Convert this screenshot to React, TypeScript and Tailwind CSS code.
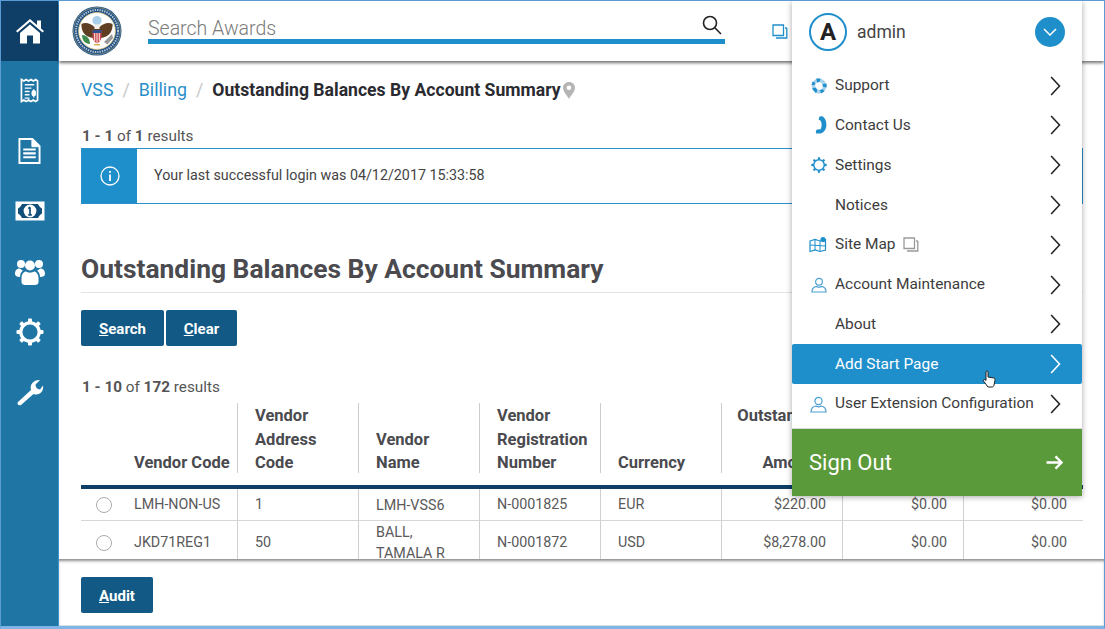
import type { ReactNode } from "react";

function Seal() {
  return (
    <svg viewBox="0 0 50 50" className="h-[50px] w-[50px]">
      <circle cx="25" cy="25" r="24.5" fill="#1d4f86" />
      <circle cx="25" cy="25" r="23.4" fill="none" stroke="#d9c77a" strokeWidth="0.5" />
      <circle cx="25" cy="25" r="21" fill="none" stroke="#b9c6cf" strokeWidth="2" strokeDasharray="1.4 1" />
      <circle cx="25" cy="25" r="18.4" fill="#ffffff" stroke="#d9c77a" strokeWidth="0.8" />
      <circle cx="25" cy="14.5" r="4.6" fill="#a9d0e8" />
      <path d="M23.5 22 C19 17 13 16 9.5 18 C9 24 12 31 21 32 L29 32 C38 31 41 24 40.5 18 C37 16 31 17 26.5 22 Z" fill="#5e3f24" />
      <path d="M22.5 18.5 H27.5 V23 H22.5 Z" fill="#f2efe6" />
      <path d="M20.5 24 H29.5 V31 C29.5 34 27.5 36 25 37.5 C22.5 36 20.5 34 20.5 31 Z" fill="#c8454a" />
      <path d="M20.5 24 H29.5 V27 H20.5 Z" fill="#2d4f8e" />
      <path d="M22.7 27 V35 M25 27 V37 M27.3 27 V35" stroke="#ffffff" strokeWidth="0.9" />
      <path d="M10 29 C14 29 18 32 18 38 C13 38 10 34 10 29 Z" fill="#3f8a4d" />
      <path d="M40 28 L32 36 L35.5 38.5 L41 32 Z" fill="#9a9a9a" />
      <path d="M22 38 H28 V39.5 H22 Z" fill="#d9b24a" />
    </svg>
  );
}

function HomeIcon() {
  return (
    <svg viewBox="0 0 28 26" className="h-[26px] w-[28px]" fill="#ffffff">
      <path d="M14 1 L21 7 V2.5 H25 V10.4 L28 13 L26.6 14.6 L14 3.8 L1.4 14.6 L0 13 Z" />
      <path d="M14 6.4 L24 15 V25.5 H17 V17.5 H11 V25.5 H4 V15 Z" />
    </svg>
  );
}

function ReceiptIcon() {
  return (
    <svg viewBox="0 0 20 26" className="h-[25px] w-[19px]" fill="none" stroke="#ffffff">
      <path d="M1.5 1.5 L4 3 L6.5 1.5 L9 3 L11.5 1.5 L14 3 L16.5 1.5 L18.5 3 V23 L16.5 24.5 L14 23 L11.5 24.5 L9 23 L6.5 24.5 L4 23 L1.5 24.5 Z" strokeWidth="1.8" />
      <path d="M5 7 H15 M5 10.5 H12 M5 14 H10 M5 17.5 H10 M5 21 H10" strokeWidth="1.5" />
      <path d="M14.5 11.5 V20.5" strokeWidth="1" />
      <ellipse cx="14.5" cy="16" rx="2.4" ry="3.4" fill="#ffffff" stroke="none" />
    </svg>
  );
}

function DocIcon() {
  return (
    <svg viewBox="0 0 24 28" className="h-[28px] w-[23px]" fill="none" stroke="#ffffff" strokeWidth="2">
      <path d="M1.5 1.5 H15 L22.5 9 V26.5 H1.5 Z" />
      <path d="M14.5 1.5 V9.5 H22.5" fill="#ffffff" strokeWidth="1" />
      <path d="M5.5 12.5 H18.5 M5.5 16.5 H18.5 M5.5 20.5 H18.5" strokeWidth="2.2" />
    </svg>
  );
}

function BillIcon() {
  return (
    <svg viewBox="0 0 30 20" className="h-[20px] w-[30px]">
      <rect x="0.5" y="0.5" width="29" height="19" fill="#ffffff" />
      <path d="M7 3 H23 C24 5 25.5 7 27 7.5 V12.5 C25.5 13 24 15 23 17 H7 C6 15 4.500 13 3 12.500 V7.500 C4.500 7 6 5 7 3 Z" fill="#0f4f7a" />
      <circle cx="15" cy="10" r="6.4" fill="#ffffff" />
      <path d="M15 6.200 V13.800 M13.300 7.600 L15 6.200 M13.200 13.800 H16.800" stroke="#0f4f7a" strokeWidth="1.700" fill="none" />
    </svg>
  );
}

function UsersIcon() {
  return (
    <svg viewBox="0 0 30 27" className="h-[27px] w-[30px]" fill="#ffffff">
      <circle cx="6" cy="6" r="4" />
      <circle cx="24" cy="6" r="4" />
      <circle cx="15" cy="7.5" r="5" />
      <path d="M0 16 C0 12 2 10.5 5 10.5 C6.5 12 7.5 12.5 8 12.5 C5.5 14.5 5 17 5 19 C2 19 0 18 0 16 Z" />
      <path d="M30 16 C30 12 28 10.5 25 10.5 C23.5 12 22.5 12.5 22 12.5 C24.5 14.5 25 17 25 19 C28 19 30 18 30 16 Z" />
      <path d="M6.5 20 C6.5 16 9 13.5 11 13.5 C13 15 17 15 19 13.5 C21 13.5 23.5 16 23.5 20 V24 C23.5 26 22 27 20 27 H10 C8 27 6.5 26 6.5 24 Z" />
    </svg>
  );
}

function GearIcon({ size = "h-[28px] w-[28px]", color = "#ffffff", width = 3.2 }: { size?: string; color?: string; width?: number }) {
  const teeth = [0, 45, 90, 135, 180, 225, 270, 315];
  return (
    <svg viewBox="0 0 28 28" className={size}>
      <circle cx="14" cy="14" r="9.2" fill="none" stroke={color} strokeWidth={width} />
      {teeth.map((a) => (
        <rect key={a} x="12" y="0.5" width="4" height="4" rx="1" fill={color} transform={`rotate(${a} 14 14)`} />
      ))}
    </svg>
  );
}

function WrenchIcon() {
  return (
    <svg viewBox="0 0 28 28" className="h-[28px] w-[28px]" fill="#ffffff">
      <path d="M2 24 L15 12 C13.5 6 18 1.5 24 2 L19.5 6.5 C19.5 9.5 21 11 24 11.5 L27 7.5 C28 14 23 18 17.5 16 L5 27 C3 28 0.5 26 2 24 Z" />
    </svg>
  );
}

function ScreensIcon({ color }: { color: string }) {
  return (
    <svg viewBox="0 0 16 15" className="h-[15px] w-[16px]" fill="none" stroke={color} strokeWidth="1.3">
      <path d="M1 1 H11.500 V11.500 H1 Z" />
      <path d="M4 14 H14.800 V4 M13 4 H14.800" />
    </svg>
  );
}

function SupportIcon() {
  return (
    <svg viewBox="0 0 16 16" className="h-[16px] w-[16px]" fill="#1f8fcb">
      <circle cx="8" cy="8" r="5.6" fill="none" stroke="#a6d1ea" strokeWidth="3.6" />
      <path d="M5.2 0.6 L9.4 0.4 L8.6 3.8 L6.2 4.6 Z M15.6 5.4 L15.6 9.6 L12 8.8 L11.4 6.2 Z M1 10.6 L4.8 9.6 L6.4 12 L5 15.2 Z M9 12.2 L11.4 11.2 L13.6 13.2 L10 15.6 Z M0.5 7 L1.6 3.4 L4 4.8 L3.6 7 Z" />
    </svg>
  );
}

function PhoneIcon() {
  return (
    <svg viewBox="0 0 12 18" className="h-[18px] w-[12px]" fill="#1f8fcb">
      <path d="M4.5 0.4 L7.5 0.2 C10.4 2.4 11.4 5.4 11.4 9 C11.4 13 9.4 16 5.8 17.6 L1.2 17.4 L0.8 15 L2 13.6 L5.6 13.2 C7 10.6 7 7.2 5.6 4.8 L3.6 3.6 Z" />
    </svg>
  );
}

function MapIcon() {
  return (
    <svg viewBox="0 0 18 17" className="h-[17px] w-[18px]" fill="none" stroke="#1f8fcb" strokeWidth="1.2">
      <path d="M1 5 L6 3.5 L11 5 L16.5 3.5 V14 L11 15.5 L6 14 L1 15.5 Z" />
      <path d="M6 3.5 V14 M11 5 V15.5 M1 9 L16 10" strokeWidth="1" />
      <circle cx="14" cy="3.5" r="2.6" fill="#1f8fcb" stroke="none" />
    </svg>
  );
}

function UserIcon({ size }: { size: string }) {
  return (
    <svg viewBox="0 0 17 17" className={size} fill="none" stroke="#4a9fd1" strokeWidth="1.2">
      <circle cx="8.5" cy="5" r="3.6" />
      <path d="M1 16 C1 12 3 10.5 6 10 C7.5 11 9.5 11 11 10 C14 10.5 16 12 16 16 Z" />
    </svg>
  );
}

function Chevron({ color = "#222222" }: { color?: string }) {
  return (
    <svg viewBox="0 0 12 22" className="h-[20px] w-[11px]" fill="none" stroke={color} strokeWidth="1.7">
      <path d="M1.2 1.2 L10.4 11 L1.2 20.8" />
    </svg>
  );
}

const menuItems: { label: string; icon?: ReactNode; extra?: ReactNode; active?: boolean }[] = [
  { label: "Support", icon: <SupportIcon /> },
  { label: "Contact Us", icon: <PhoneIcon /> },
  { label: "Settings", icon: <GearIcon size="h-[16px] w-[16px]" color="#1f8fcb" width={2.6} /> },
  { label: "Notices" },
  { label: "Site Map", icon: <MapIcon />, extra: <ScreensIcon color="#9a9a9a" /> },
  { label: "Account Maintenance", icon: <UserIcon size="h-[16px] w-[16px]" /> },
  { label: "About" },
  { label: "Add Start Page", active: true },
  { label: "User Extension Configuration", icon: <UserIcon size="h-[17px] w-[17px]" /> },
];

function AccountMenu() {
  return (
    <div className="absolute left-[791px] top-0 z-20 flex h-[495px] w-[290px] flex-col bg-white shadow-[0_1px_6px_rgba(0,0,0,0.35)]">
      <div className="flex h-[64.8px] items-start pl-[17px] pr-[17px] pt-[12px]">
        <div className="flex h-[38px] w-[38px] items-center justify-center rounded-full border-2 border-[#1f8fcb] text-[24px] font-bold text-[#222222]">
          A
        </div>
        <span className="ml-[10px] mt-[9px] text-[17.5px] leading-[20px] text-[#444444]">admin</span>
        <div className="ml-auto mt-[4px] flex h-[30px] w-[30px] items-center justify-center rounded-full bg-[#1f8fcb]">
          <svg viewBox="0 0 14 8" className="h-[8px] w-[14px]" fill="none" stroke="#ffffff" strokeWidth="1.5">
            <path d="M1 1 L7 7 L13 1" />
          </svg>
        </div>
      </div>
      {menuItems.map((item) => (
        <div
          key={item.label}
          className={
            item.active
              ? "relative flex h-[39.8px] items-center rounded-[2px] bg-[#1f8fcb] pr-[21px] text-white"
              : "flex h-[39.8px] items-center pr-[21px] text-[#3c3c3c]"
          }
        >
          <span className="flex w-[43px] items-center justify-end pr-[8px]">{item.icon}</span>
          <span className="text-[15.45px]">{item.label}</span>
          {item.extra && <span className="ml-[7px] flex">{item.extra}</span>}
          <span className="ml-auto flex">
            <Chevron color={item.active ? "#ffffff" : "#222222"} />
          </span>
          {item.active && (
            <svg viewBox="0 0 14 18" className="absolute left-[190px] top-[26px] h-[18px] w-[14px]" fill="#ffffff" stroke="#222222" strokeWidth="1">
              <path d="M4 9 V2 C4 0.6 6 0.6 6 2 V7 L12 8 C13 8.4 13 9 13 10 L12 15 C12 16 11 17 10 17 H6 L1.5 11 C1 10 2.4 8.6 4 10.5 Z" />
            </svg>
          )}
        </div>
      ))}
      <div className="mt-auto flex h-[68px] items-center justify-between border-t border-[#d8d8d8] bg-[#5b9a3a] pl-[17px] pr-[18px] text-white">
        <span className="text-[22px]">Sign Out</span>
        <svg viewBox="0 0 18 16" className="h-[15px] w-[18px]" fill="none" stroke="#ffffff" strokeWidth="2.5">
          <path d="M0 8 H16 M9.5 1.5 L16 8 L9.5 14.5" />
        </svg>
      </div>
    </div>
  );
}

const columns: { label: string[]; className: string; lineClass?: string[] }[] = [
  { label: ["", "", ""], className: "" },
  { label: ["", "", "Vendor Code"], className: "border-r pl-[11px]" },
  { label: ["Vendor", "Address", "Code"], className: "border-r pl-[17px]" },
  { label: ["", "Vendor", "Name"], className: "border-r pl-[17px]" },
  { label: ["Vendor", "Registration", "Number"], className: "border-r pl-[17px]" },
  { label: ["", "", "Currency"], className: "border-r pl-[17px]" },
  { label: ["Outstanding", "", "Amount"], className: "border-r text-right", lineClass: ["pr-[14px]", "", "pr-[21px]"] },
  { label: ["", "", ""], className: "border-r" },
  { label: ["", "", ""], className: "" },
];

const rows = [
  { code: "LMH-NON-US", address: "1", name: ["LMH-VSS6"], reg: "N-0001825", currency: "EUR", amount: "$220.00", h: "h-[32px]" },
  { code: "JKD71REG1", address: "50", name: ["BALL,", "TAMALA R"], reg: "N-0001872", currency: "USD", amount: "$8,278.00", h: "h-[42px]" },
];

function ResultsTable() {
  const cell = "border-b border-[#d6d6d6] p-0 pt-[1px]";
  const divided = "border-b border-r border-[#d0d0d0] border-b-[#d6d6d6] p-0 pt-[1px]";
  return (
    <table className="w-[1002px] table-fixed border-separate border-spacing-0 text-[14.3px] text-[#5a5a5a]">
      <colgroup>
        <col className="w-[42px]" />
        <col className="w-[115px]" />
        <col className="w-[121px]" />
        <col className="w-[121px]" />
        <col className="w-[121px]" />
        <col className="w-[121px]" />
        <col className="w-[121px]" />
        <col className="w-[121px]" />
        <col className="w-[119px]" />
      </colgroup>
      <thead>
        <tr>
          {columns.map((col, i) => (
            <th key={i} className="border-b-4 border-[#0f3e66] p-0 pb-[12px] align-top font-bold">
              <div className={`h-[70px] border-[#cccccc] pt-[1px] text-left text-[16.5px] leading-[23.5px] text-[#4a4a4f] ${col.className}`}>
                {col.label.map((line, j) => (
                  <div key={j} className={`h-[23.5px] whitespace-nowrap ${col.lineClass ? col.lineClass[j] : ""}`}>
                    {line}
                  </div>
                ))}
              </div>
            </th>
          ))}
        </tr>
      </thead>
      <tbody>
        {rows.map((row) => (
          <tr key={row.code} className={row.h}>
            <td className={`${cell} pl-[15px]`}>
              <div className="h-[16px] w-[16px] rounded-full border border-[#aaaaaa]" />
            </td>
            <td className={`${divided} pl-[11px]`}>{row.code}</td>
            <td className={`${divided} pl-[17px]`}>{row.address}</td>
            <td className={`${divided} pl-[17px] leading-[21px]`}>
              {row.name.map((n) => (
                <div key={n}>{n}</div>
              ))}
            </td>
            <td className={`${divided} pl-[17px]`}>{row.reg}</td>
            <td className={`${divided} pl-[17px]`}>{row.currency}</td>
            <td className={`${divided} pr-[16px] text-right`}>{row.amount}</td>
            <td className={`${divided} pr-[16px] text-right`}>$0.00</td>
            <td className={`${cell} pr-[16px] text-right`}>$0.00</td>
          </tr>
        ))}
      </tbody>
    </table>
  );
}

const navIcons = [<ReceiptIcon />, <DocIcon />, <BillIcon />, <UsersIcon />, <GearIcon />, <WrenchIcon />];

export default function App() {
  return (
    <div
      className="relative flex h-[629px] w-[1105px] overflow-hidden border border-b-[3px] border-[#5b9bd5] border-b-[#7fb4e4] bg-white"
      style={{ fontFamily: "Roboto, sans-serif" }}
    >
      <aside className="flex w-[58px] shrink-0 flex-col border-r border-[#3f93cc] bg-[#1f76a5]">
        <div className="flex h-[60px] items-center justify-center bg-[#0f3e66] pb-[1px]">
          <HomeIcon />
        </div>
        <div className="-mt-[1px]">
          {navIcons.map((icon, i) => (
            <div key={i} className="flex h-[60.4px] items-center justify-center">
              {icon}
            </div>
          ))}
        </div>
      </aside>

      <div className="flex min-w-0 flex-1 flex-col">
        <header className="z-10 flex h-[60px] shrink-0 items-center bg-white pl-[13px] shadow-[0_2px_3px_rgba(0,0,0,0.55)]">
          <Seal />
          <div className="mb-[17px] ml-[26px] flex h-[28px] w-[577px] items-center justify-between self-end border-b-[5px] border-[#1f8fcb]">
            <span className="pt-[2px] text-[19.5px] font-light text-[#7a7a7a]">Search Awards</span>
            <svg viewBox="0 0 20 20" className="mb-[6px] mr-[3px] h-[20px] w-[20px]" fill="none" stroke="#222222" strokeWidth="1.6">
              <circle cx="8" cy="8" r="6.5" />
              <path d="M12.8 12.8 L19 19" />
            </svg>
          </div>
          <div className="ml-[47px] flex">
            <ScreensIcon color="#1f8fcb" />
          </div>
        </header>

        <main className="min-h-0 flex-1 overflow-hidden pl-[22px] pr-[21px]">
          <nav className="mt-[15px] flex h-[28px] items-center text-[17.8px] text-[#2a8fcb]">
            <span>VSS</span>
            <span className="mx-[9px] text-[#c8c8c8]">/</span>
            <span>Billing</span>
            <span className="mx-[9px] text-[#c8c8c8]">/</span>
            <span className="text-[17.6px] font-bold text-[#2a2a30]">Outstanding Balances By Account Summary</span>
            <svg viewBox="0 0 12 17" className="ml-[2px] h-[17px] w-[12px]" fill="#b5b5b5">
              <path fillRule="evenodd" d="M6 0 C9.5 0 12 2.5 12 5.8 C12 9.5 8 13.5 6 17 C4 13.5 0 9.5 0 5.8 C0 2.5 2.5 0 6 0 Z M6 3.5 A2.3 2.3 0 1 0 6 8.1 A2.3 2.3 0 1 0 6 3.5 Z" />
            </svg>
          </nav>

          <p className="mt-[22px] pl-[1px] text-[15.3px] leading-[20px] text-[#555555]">
            <b>1 - 1</b> of <b>1</b> results
          </p>
          <div className="mt-[2px] flex h-[56px] border border-[#2a8fcb]">
            <div className="flex w-[55px] items-center justify-center bg-[#1f8fcb]">
              <svg viewBox="0 0 20 20" className="h-[20px] w-[20px]" fill="none" stroke="#ffffff" strokeWidth="1.3">
                <circle cx="10" cy="10" r="9" />
                <path d="M10 8.5 V15 M10 5 V6.8" strokeWidth="1.8" />
              </svg>
            </div>
            <div className="flex items-center pl-[17px] text-[14.3px] text-[#444444]">
              Your last successful login was 04/12/2017 15:33:58
            </div>
          </div>

          <h1 className="mt-[49px] h-[40px] border-b border-[#e4e4df] text-[26.4px] font-bold leading-[32px] text-[#4a4a4f]">
            Outstanding Balances By Account Summary
          </h1>

          <div className="mt-[17px] flex gap-[2px]">
            <button className="h-[36px] w-[83px] rounded-[2px] bg-[#125a85] pt-[2px] text-[15px] font-bold text-white">
              <u>S</u>earch
            </button>
            <button className="h-[36px] w-[71px] rounded-[2px] bg-[#125a85] pt-[2px] text-[15px] font-bold text-white">
              <u>C</u>lear
            </button>
          </div>

          <p className="mt-[31px] pl-[1px] text-[15.3px] leading-[20px] text-[#555555]">
            <b>1 - 10</b> of <b>172</b> results
          </p>
          <div className="mt-[6px]">
            <ResultsTable />
          </div>
        </main>

        <footer className="flex h-[67px] shrink-0 items-start border-b border-[#d4e0ea] bg-white pl-[22px] pt-[18px] shadow-[inset_0_3px_3px_-1px_rgba(0,0,0,0.45)]">
          <button className="h-[36px] w-[72px] rounded-[2px] bg-[#125a85] pt-[2px] text-[15px] font-bold text-white">
            <u>A</u>udit
          </button>
        </footer>
      </div>

      <AccountMenu />
    </div>
  );
}
